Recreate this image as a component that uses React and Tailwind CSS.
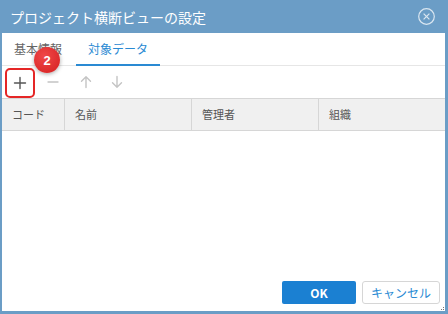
import React from 'react';

const font = { fontFamily: '"Noto Sans CJK JP", "Noto Sans", sans-serif' };

const columns = [
  { label: 'コード', w: 'w-[63px]' },
  { label: '名前', w: 'w-[127px]' },
  { label: '管理者', w: 'w-[127px]' },
  { label: '組織', w: 'flex-1' },
];

function ToolIcon({ d, active }) {
  return (
    <svg width="14" height="14" viewBox="0 0 14 14" fill="none"
      stroke={active ? '#555' : '#c4c4c4'} strokeWidth="1.4" strokeLinecap="round" strokeLinejoin="round">
      <path d={d} />
    </svg>
  );
}

export default function App() {
  return (
    <div className="w-[448px] h-[314px] bg-[#6b9dc6] flex flex-col pl-[2px] pr-[3px] pb-[3px]" style={font}>
      {/* title bar */}
      <div className="h-[33px] flex items-center justify-between pl-[8px] pr-[10px] text-white">
        <span className="text-[14px] leading-none">プロジェクト横断ビューの設定</span>
        <svg width="17" height="17" viewBox="0 0 17 17" fill="none" stroke="rgba(255,255,255,0.75)" strokeWidth="1.2">
          <circle cx="8.5" cy="8.5" r="7.8" />
          <path d="M5.6 5.6 L11.4 11.4 M11.4 5.6 L5.6 11.4" />
        </svg>
      </div>

      <div className="flex-1 bg-white flex flex-col relative">
        {/* tabs */}
        <div className="h-[33px] flex border-b border-[#e6e6e6] text-[12px]">
          <div className="pl-[12px] pr-[14px] flex items-center text-[#666]">基本情報</div>
          <div className="w-[84px] flex items-center justify-center text-[#2a8ad3] border-b-[2px] border-[#2a8ad3] mb-[-1px]">
            対象データ
          </div>
        </div>

        {/* toolbar */}
        <div className="h-[32px] flex items-center">
          <div className="w-[30px] h-[30px] ml-[3px] mt-[1px] flex items-center justify-center border-2 border-[#e52626] rounded-[5px]">
            <ToolIcon d="M7 1.5 V12.5 M1.5 7 H12.5" active />
          </div>
          <div className="w-[36px] flex justify-center">
            <ToolIcon d="M2 7 H12" />
          </div>
          <div className="w-[30px] flex justify-center">
            <ToolIcon d="M7 12.5 V1.8 M2.5 6.3 L7 1.8 L11.5 6.3" />
          </div>
          <div className="w-[32px] flex justify-center">
            <ToolIcon d="M7 1.5 V12.2 M2.5 7.7 L7 12.2 L11.5 7.7" />
          </div>
        </div>

        {/* table header */}
        <div className="h-[33px] flex bg-[#f0f0f0] border-y border-[#d6d6d6] text-[11px] text-[#555]">
          {columns.map((c, i) => (
            <div key={c.label}
              className={`${c.w} flex items-center pl-[10px] ${i < columns.length - 1 ? 'border-r border-[#d6d6d6]' : ''}`}>
              {c.label}
            </div>
          ))}
        </div>

        <div className="flex-1" />

        {/* footer */}
        <div className="flex justify-end gap-[6px] pr-[5px] pb-[7px] text-[12px]">
          <button className="w-[74px] h-[23px] bg-[#1b80d2] text-white rounded-[2px] font-bold" style={font}>OK</button>
          <button className="w-[78px] h-[23px] bg-white text-[#2a8ad3] border border-[#d6d6d6] rounded-[3px]" style={font}>キャンセル</button>
        </div>

        {/* resize grip */}
        <div className="absolute right-[1px] bottom-[1px] flex flex-col items-end gap-[1px]">
          <div className="w-[1px] h-[1px] bg-[#777]" />
          <div className="flex gap-[1px]"><div className="w-[1px] h-[1px] bg-[#777]" /><div className="w-[1px] h-[1px] bg-[#777]" /></div>
        </div>

        {/* badge */}
        <div className="absolute left-[32px] top-[14px] w-[26px] h-[26px] rounded-full bg-[radial-gradient(circle_at_40%_35%,#f04848,#d41f1f)] shadow-[0_1px_4px_rgba(0,0,0,0.35)] flex items-center justify-center text-white text-[13px] font-bold leading-none"
          style={{ fontFamily: '"Liberation Sans", Arial, sans-serif' }}>
          2
        </div>
      </div>
    </div>
  );
}
